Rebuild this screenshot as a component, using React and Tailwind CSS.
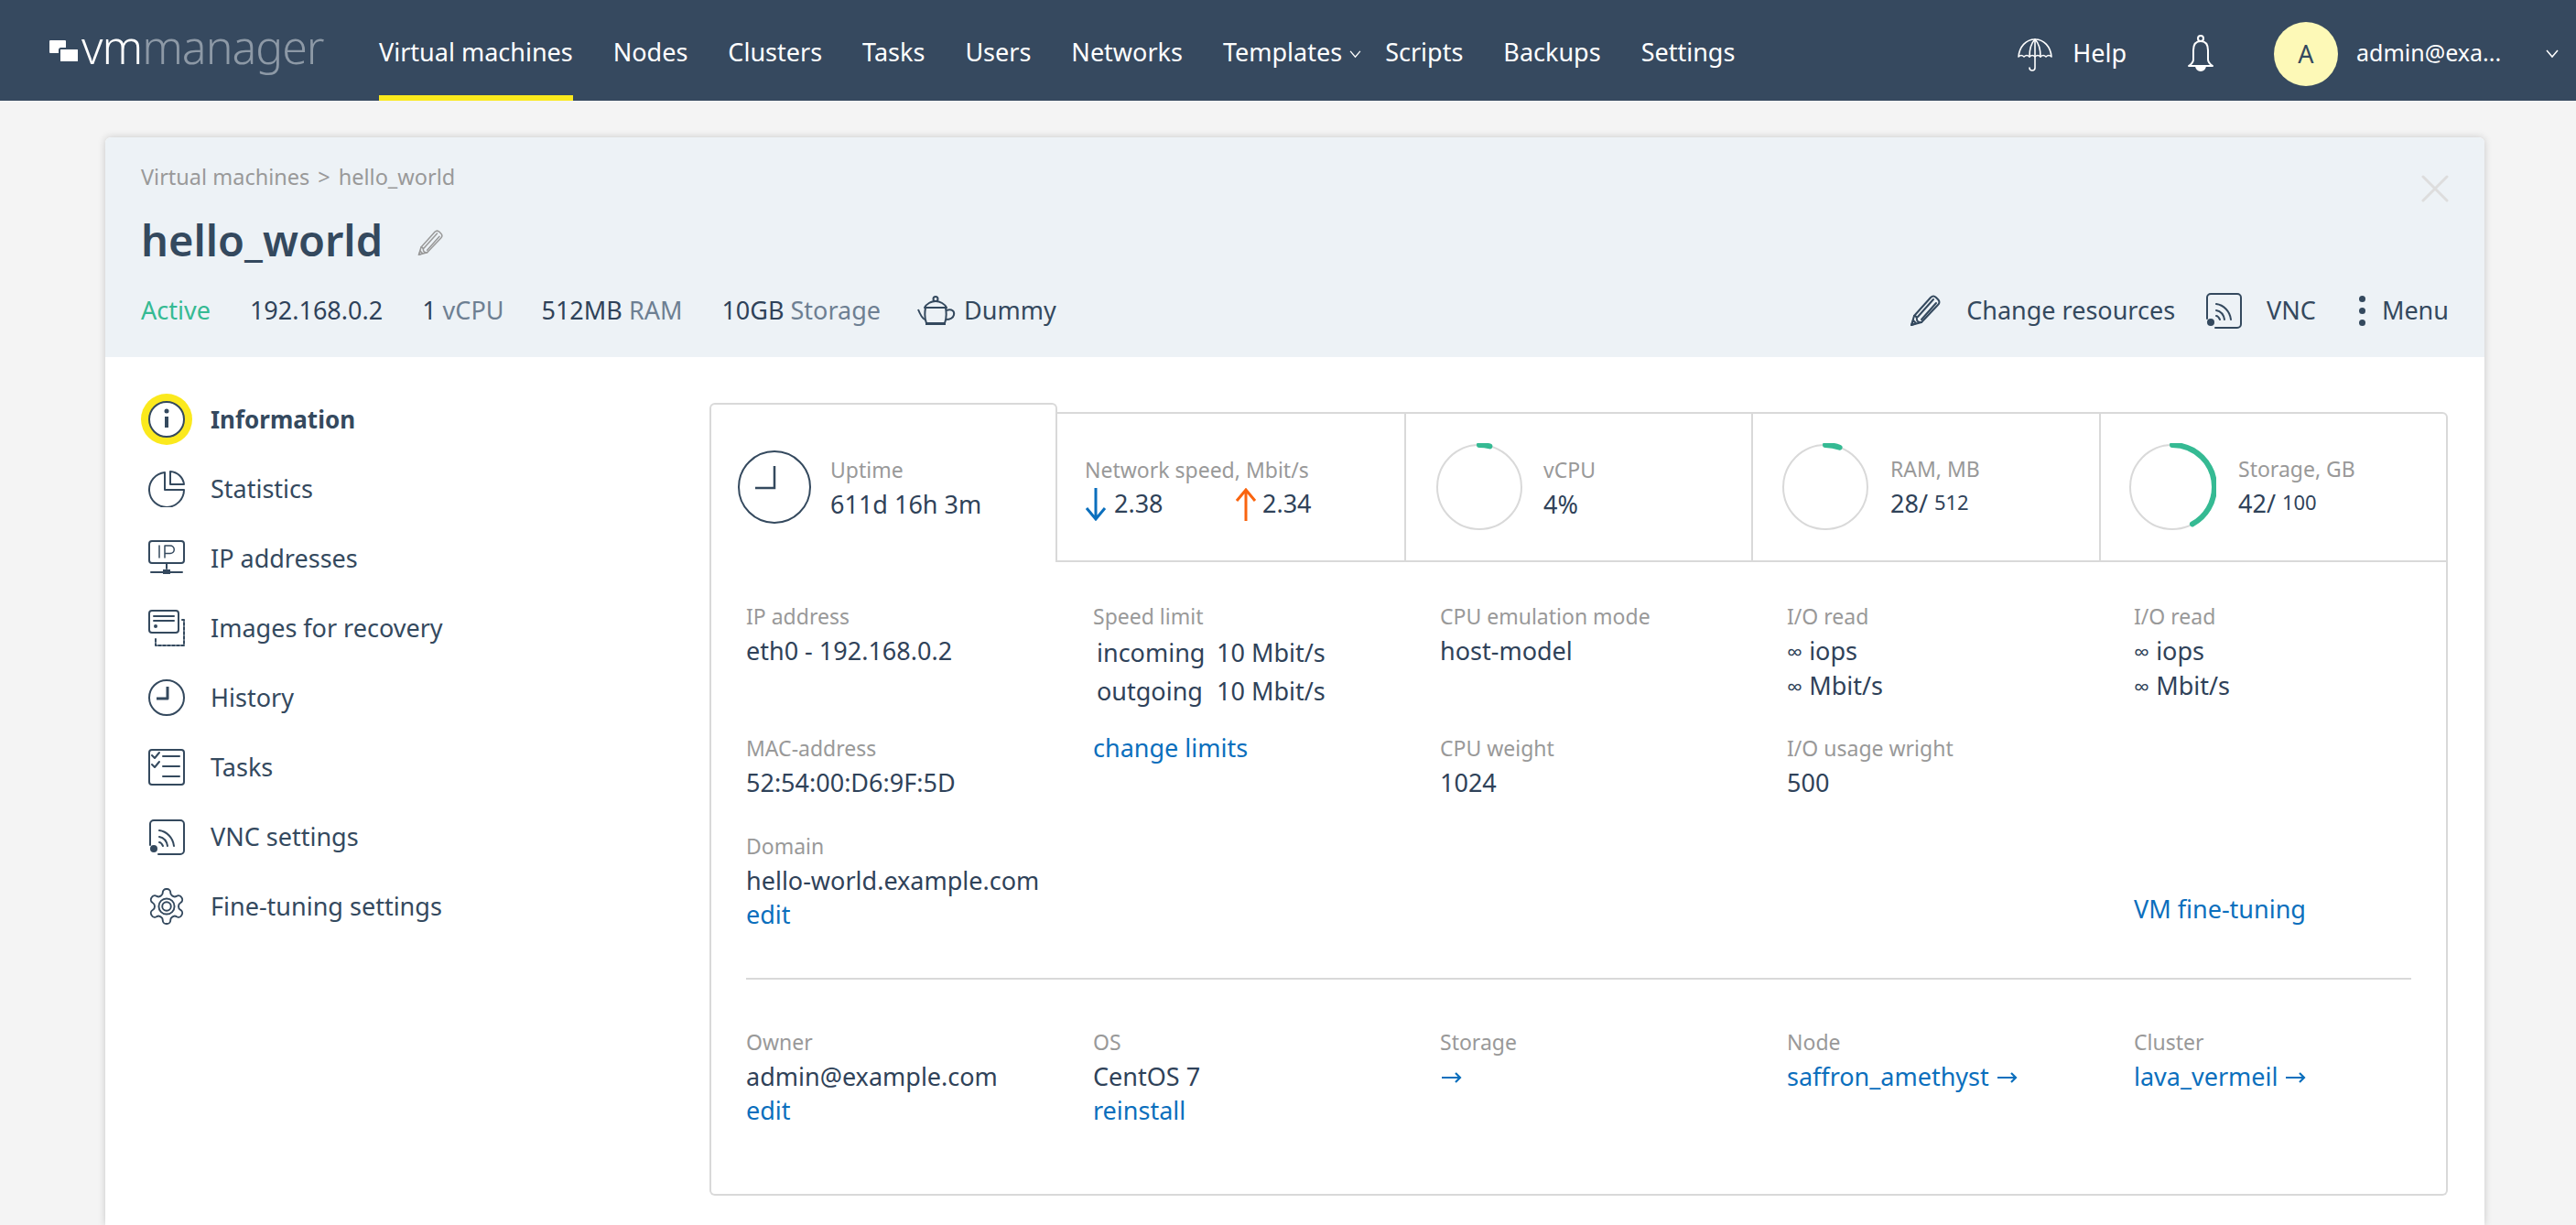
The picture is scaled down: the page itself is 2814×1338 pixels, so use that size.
const FONT = "font-['Noto_Sans','Open_Sans',sans-serif]";

function Pencil({ className, sw = 2 }) {
  return (
    <svg viewBox="0 0 34 36" fill="none" stroke="currentColor" strokeWidth={sw} strokeLinejoin="round" strokeLinecap="round" className={className}>
      <path d="M2 34l3-10L23 4c2-2 4-2 6 0l2 2c2 2 2 4 0 6L13 31z" />
      <path d="M5 24c3 0 3 2 3 4s2 3 5 3M9 25L26 6M13 28L29 10M2 34l5-2-3-3z" />
    </svg>
  );
}

function Wifi({ className }) {
  return (
    <svg viewBox="0 0 40 40" fill="none" stroke="currentColor" strokeWidth="2" strokeLinecap="round" className={className}>
      <path d="M2 29V6a4 4 0 0 1 4-4h29a4 4 0 0 1 4 4v29a4 4 0 0 1-4 4H11" />
      <circle cx="6" cy="33" r="4" fill="currentColor" stroke="none" />
      <path d="M12 13c8 1 15 8 16 17M12 20c5 1 8 4 9 10M12 26c2 0 3 2 4 4" />
    </svg>
  );
}

function SideIcon({ name }) {
  const common = { viewBox: "0 0 40 40", fill: "none", stroke: "currentColor", strokeWidth: 2, strokeLinecap: "round", strokeLinejoin: "round", className: "w-10 h-10 text-[#34495e] relative" };
  if (name === "info") return (
    <svg {...common}>
      <circle cx="20" cy="20" r="19" fill="#ffffff" />
      <path d="M20 17v12" strokeWidth="4" strokeLinecap="butt" />
      <circle cx="20" cy="11" r="2.5" fill="currentColor" stroke="none" />
    </svg>
  );
  if (name === "stats") return (
    <svg {...common}>
      <path d="M18 2A19 19 0 1 0 39 21H18z" />
      <path d="M24 1v14h15A16 16 0 0 0 24 1z" />
    </svg>
  );
  if (name === "ip") return (
    <svg {...common}>
      <rect x="1" y="1" width="38" height="24" rx="3" />
      <path d="M12 6v13M18 19V6h6a4 4 0 0 1 0 8.500h-6" strokeWidth="1.500" />
      <path d="M3 35h34M20 25v6" />
      <rect x="16" y="32" width="8" height="5" fill="currentColor" stroke="none" />
    </svg>
  );
  if (name === "images") return (
    <svg {...common}>
      <rect x="1" y="1" width="32" height="24" rx="3" />
      <path d="M6 7h22M6 12h22" />
      <circle cx="8" cy="18" r="2" fill="currentColor" stroke="none" />
      <path d="M37 11h2v28H8v-8" strokeDasharray="3 2" />
    </svg>
  );
  if (name === "clock") return (
    <svg {...common}>
      <circle cx="20" cy="20" r="19" />
      <path d="M21 8v13H9" strokeWidth="3" strokeLinecap="butt" />
    </svg>
  );
  if (name === "tasks") return (
    <svg {...common}>
      <rect x="1" y="1" width="38" height="38" rx="3" />
      <path d="M16 8h18M16 19h18M16 30h18" />
      <path d="M4 7l3 3 5-6M4 17l3 3 5-6" />
    </svg>
  );
  if (name === "vnc") return <Wifi className="w-10 h-10 text-[#34495e]" />;
  return (
    <svg viewBox="1.500 1.500 21 21" fill="none" stroke="currentColor" strokeWidth="1" className="w-10 h-10 text-[#34495e]">
      <path d="M12.22 2h-.44a2 2 0 0 0-2 2v.18a2 2 0 0 1-1 1.730l-.43.25a2 2 0 0 1-2 0l-.15-.08a2 2 0 0 0-2.730.73l-.22.38a2 2 0 0 0 .73 2.730l.15.1a2 2 0 0 1 1 1.720v.51a2 2 0 0 1-1 1.740l-.15.09a2 2 0 0 0-.73 2.730l.22.38a2 2 0 0 0 2.730.73l.15-.08a2 2 0 0 1 2 0l.43.25a2 2 0 0 1 1 1.730V20a2 2 0 0 0 2 2h.44a2 2 0 0 0 2-2v-.18a2 2 0 0 1 1-1.730l.43-.25a2 2 0 0 1 2 0l.15.08a2 2 0 0 0 2.730-.73l.22-.39a2 2 0 0 0-.73-2.730l-.15-.08a2 2 0 0 1-1-1.740v-.5a2 2 0 0 1 1-1.740l.15-.09a2 2 0 0 0 .73-2.730l-.22-.38a2 2 0 0 0-2.730-.73l-.15.08a2 2 0 0 1-2 0l-.43-.25a2 2 0 0 1-1-1.730V4a2 2 0 0 0-2-2z" />
      <circle cx="12" cy="12" r="4.500" />
      <circle cx="12" cy="12" r="2.500" />
    </svg>
  );
}

function Ring({ pct }) {
  const r = 46;
  const c = 2 * Math.PI * r;
  return (
    <svg viewBox="0 0 96 96" className="w-24 h-24 shrink-0" fill="none">
      <circle cx="48" cy="48" r={r} stroke="#d9d9d9" strokeWidth="2" />
      <circle cx="48" cy="48" r={r} stroke="#35ba93" strokeWidth="6" strokeLinecap="round" strokeDasharray={`${(pct / 100) * c} ${c}`} transform="rotate(-90 48 48)" />
    </svg>
  );
}

function Chevron({ className }) {
  return (
    <svg viewBox="0 0 14 10" fill="none" stroke="currentColor" strokeWidth="1.500" className={className}>
      <path d="M1 1l6 7 6-7" />
    </svg>
  );
}

function Label({ children }) {
  return <div className="text-[23px] leading-[37px] text-[#999999]">{children}</div>;
}
function Value({ children }) {
  return <div className="text-[27px] leading-[37px] text-[#2f4259] whitespace-nowrap">{children}</div>;
}
function Lnk({ children, className = "" }) {
  return <div className={`text-[27px] leading-[37px] text-[#0b6fbd] whitespace-nowrap ${className}`}>{children}</div>;
}
function Arrow() {
  return (
    <svg viewBox="0 0 22 14" fill="none" stroke="currentColor" strokeWidth="2.200" className="inline-block w-[22px] h-[14px] align-[2px] ml-[2px]">
      <path d="M0 7h20M15 2l5 5-5 5" />
    </svg>
  );
}
function Inf() {
  return <span className="text-[24px] mr-[1px]">∞ </span>;
}

function Nav({ children, active, className = "" }) {
  return (
    <div className={`relative h-full flex items-center pt-[5px] whitespace-nowrap ${className}`}>
      {children}
      {active && <div className="absolute left-0 right-0 bottom-0 h-[6px] bg-[#fbe91d]" />}
    </div>
  );
}

function SideRow({ icon, children, active }) {
  return (
    <div className="flex items-center h-[76px]">
      <div className="relative w-10 h-10 ml-[47px] mr-[28px]">
        {active && <div className="absolute -inset-2 rounded-full bg-[#fbe91d]" />}
        <div className="relative"><SideIcon name={icon} /></div>
      </div>
      <span className={`text-[#34495e] ${active ? "font-bold text-[26px]" : "text-[27px]"}`}>{children}</span>
    </div>
  );
}

export default function App() {
  return (
    <div className={`${FONT} w-[2814px] h-[1338px] overflow-hidden bg-[#f4f4f4] flex flex-col`}>
      <header className="h-[110px] bg-[#36495f] flex items-stretch text-white text-[27px] shrink-0">
        <div className="flex items-center w-[414px] pl-[54px] shrink-0">
          <svg viewBox="0 0 32 24" className="w-[32px] h-[24px] mr-[3px] mt-[2px]" fill="#ffffff">
            <rect x="0" y="0" width="18" height="14" rx="1" />
            <rect x="11" y="9" width="21" height="15" rx="1.500" stroke="#36495f" strokeWidth="2" />
          </svg>
          <span className="text-[50px] font-light leading-none -mt-[8px] tracking-[-1px]">vm<span className="text-[#8d99a6]">manager</span></span>
        </div>
        <div className="flex items-stretch gap-[44px]">
          <Nav active>Virtual machines</Nav>
          <Nav>Nodes</Nav>
          <Nav>Clusters</Nav>
          <Nav>Tasks</Nav>
          <Nav>Users</Nav>
          <Nav>Networks</Nav>
          <Nav className="-mr-[18px]">Templates<Chevron className="w-[13px] h-[9px] ml-[8px] mt-[4px]" /></Nav>
          <Nav>Scripts</Nav>
          <Nav>Backups</Nav>
          <Nav>Settings</Nav>
        </div>
        <div className="ml-auto flex items-center pr-[19px] pt-[8px]">
          <svg viewBox="0 0 38 40" fill="none" stroke="#ffffff" strokeWidth="1.600" strokeLinecap="round" strokeLinejoin="round" className="w-[38px] h-[40px] mr-[22px] mt-[2px]">
            <path d="M19 3v31a3 3 0 0 1-6 0" />
            <path d="M1 22C2 11 9 3 19 3s17 8 18 19c-2-2-4-2-6 0-2-2-4-2-6 0-2-2-4-2-6 0-2-2-4-2-6 0-2-2-4-2-6 0-2-2-4-2-6 0z" />
            <path d="M13 22c0-9 2-15 6-19 4 4 6 10 6 19" />
          </svg>
          <span className="-mt-[2px]">Help</span>
          <svg viewBox="0 0 28 42" fill="none" stroke="#ffffff" strokeWidth="2" strokeLinejoin="round" className="w-[28px] h-[42px] ml-[67px]">
            <circle cx="14" cy="4" r="3" />
            <path d="M14 7c-6 0-8 5-8 10v10c0 3-2 5-5 7h26c-3-2-5-4-5-7V17c0-5-2-10-8-10z" />
            <path d="M9 34a5 5 0 0 0 10 0z" fill="#ffffff" />
          </svg>
          <div className="w-[70px] h-[70px] rounded-full bg-[#fdf9b7] text-[#34495e] flex items-center justify-center ml-[66px] text-[27px]">A</div>
          <span className="ml-[20px] w-[176px] text-[25px] -mt-[2px] whitespace-nowrap">admin@exa...</span>
          <Chevron className="w-[14px] h-[10px] ml-[31px]" />
        </div>
      </header>

      <div className="flex-1 mt-[40px] mx-[115px] mr-[100px] rounded-t-[6px] bg-white shadow-[0_0_8px_rgba(0,0,0,0.18)] relative">
        <div className="h-[240px] bg-[#edf2f6] rounded-t-[6px] px-[39px] flex flex-col text-[#34495e]">
          <div className="text-[23.500px] text-[#999999] mt-[24px] leading-[38px] flex">
            <span>Virtual machines</span><span className="mx-[9px]">&gt;</span><span>hello_world</span>
          </div>
          <div className="flex items-center mt-[22px] h-[56px]">
            <span className="text-[47px] font-semibold leading-none">hello_world</span>
            <Pencil className="w-[30px] h-[30px] ml-[37px] mt-[6px] text-[#999999]" sw={1.800} />
          </div>
          <div className="flex items-center h-[40px] mt-[29px] text-[27px] whitespace-nowrap">
            <span className="text-[#35ba93] mr-[43px]">Active</span>
            <span className="mr-[43px] text-[#2f4259]">192.168.0.2</span>
            <span className="mr-[41px] text-[#2f4259]">1 <span className="text-[#6d7f92]">vCPU</span></span>
            <span className="mr-[43px] text-[#2f4259]">512MB <span className="text-[#6d7f92]">RAM</span></span>
            <span className="mr-[40px] text-[#2f4259]">10GB <span className="text-[#6d7f92]">Storage</span></span>
            <svg viewBox="0 0 42 32" fill="none" stroke="#34495e" strokeWidth="2" strokeLinejoin="round" className="w-[42px] h-[32px] mr-[9px]">
              <circle cx="20" cy="3.500" r="2.500" />
              <path d="M8 13c2-4 7-7 12-7s10 3 12 7z" />
              <path d="M9 13c-1 6-1 12 1 17h20c2-5 2-11 1-17" />
              <path d="M32 16c6-2 9 1 8 5s-4 5-9 5" />
              <path d="M8 26C5 24 3 20 1 15" />
              <path d="M9 31h22" strokeWidth="3" />
            </svg>
            <span>Dummy</span>
            <div className="ml-auto flex items-center">
              <Pencil className="w-[34px] h-[36px] mr-[28px]" />
              <span>Change resources</span>
              <Wifi className="w-[40px] h-[40px] ml-[33px] mr-[27px]" />
              <span>VNC</span>
              <span className="flex flex-col gap-[6px] ml-[47px] mr-[18px]">
                <span className="w-[7px] h-[7px] rounded-full bg-[#34495e]" />
                <span className="w-[7px] h-[7px] rounded-full bg-[#34495e]" />
                <span className="w-[7px] h-[7px] rounded-full bg-[#34495e]" />
              </span>
              <span>Menu</span>
            </div>
          </div>
        </div>
        <svg viewBox="0 0 30 30" fill="none" stroke="#dddddd" strokeWidth="3" strokeLinecap="round" className="absolute top-[41px] right-[39px] w-[30px] h-[30px]">
          <path d="M2 2l26 26M28 2L2 28" />
        </svg>

        <div className="flex">
          <div className="w-[660px] shrink-0 pt-[30px]">
            <SideRow icon="info" active>Information</SideRow>
            <SideRow icon="stats">Statistics</SideRow>
            <SideRow icon="ip">IP addresses</SideRow>
            <SideRow icon="images">Images for recovery</SideRow>
            <SideRow icon="clock">History</SideRow>
            <SideRow icon="tasks">Tasks</SideRow>
            <SideRow icon="vnc">VNC settings</SideRow>
            <SideRow icon="gear">Fine-tuning settings</SideRow>
          </div>
          <div className="w-[1899px] mt-[50px] shrink-0">
            <div className="flex items-end h-[174px]">
              <div className="w-[380px] h-[174px] border-2 border-b-0 border-[#d9d9d9] rounded-t-[6px] flex items-center pl-[29px] bg-white pt-[8px] shrink-0">
                <svg viewBox="0 0 80 80" fill="none" stroke="#34495e" strokeWidth="2" className="w-20 h-20 shrink-0 mr-[21px]">
                  <circle cx="40" cy="40" r="39" />
                  <path d="M40 17v24H19" strokeWidth="2.500" />
                </svg>
                <div><Label>Uptime</Label><Value>611d 16h 3m</Value></div>
              </div>
              <div className="flex-1 h-[164px] border-t-2 border-b-2 border-r-2 border-[#d9d9d9] rounded-tr-[6px] flex">
                <div className="w-[381px] border-r-2 border-[#d9d9d9] pl-[30px] flex flex-col justify-center shrink-0">
                  <Label>Network speed, Mbit/s</Label>
                  <div className="flex items-center h-[37px] text-[27px] text-[#2f4259]">
                    <svg viewBox="0 0 24 36" fill="none" stroke="#0b6fbd" strokeWidth="3" className="w-[24px] h-[36px] mr-[8px]"><path d="M12 0v33M2 22l10 12 10-12" /></svg>
                    <span className="w-[132px]">2.38</span>
                    <svg viewBox="0 0 24 36" fill="none" stroke="#f9640f" strokeWidth="3" className="w-[24px] h-[36px] mr-[6px]"><path d="M12 36V3M2 14L12 2l10 12" /></svg>
                    <span>2.34</span>
                  </div>
                </div>
                <div className="w-[379px] border-r-2 border-[#d9d9d9] pl-[32px] flex items-center gap-[22px] shrink-0">
                  <Ring pct={4} />
                  <div><Label>vCPU</Label><Value>4%</Value></div>
                </div>
                <div className="w-[380px] border-r-2 border-[#d9d9d9] pl-[31px] flex items-center gap-[23px] shrink-0">
                  <Ring pct={5.500} />
                  <div><Label>RAM, MB</Label><Value>28/ <span className="text-[22px] relative -top-[3px]">512</span></Value></div>
                </div>
                <div className="flex-1 pl-[30px] flex items-center gap-[24px]">
                  <Ring pct={42} />
                  <div><Label>Storage, GB</Label><Value>42/ <span className="text-[22px] relative -top-[3px]">100</span></Value></div>
                </div>
              </div>
            </div>

            <div className="border-2 border-t-0 border-[#d9d9d9] rounded-b-[6px] h-[692px] pl-[38px] pr-[38px]">
              <div className="grid grid-cols-[repeat(5,379px)] grid-rows-[144px_107px_auto] pt-[41px]">
                <div><Label>IP address</Label><Value>eth0 - 192.168.0.2</Value></div>
                <div>
                  <Label>Speed limit</Label>
                  <div className="grid grid-cols-[131px_auto] ml-[4px] text-[27px] leading-[42px] text-[#2f4259]">
                    <span>incoming</span><span>10 Mbit/s</span>
                    <span>outgoing</span><span>10 Mbit/s</span>
                  </div>
                </div>
                <div><Label>CPU emulation mode</Label><Value>host-model</Value></div>
                <div><Label>I/O read</Label><Value><Inf />iops</Value><Value><Inf />Mbit/s</Value></div>
                <div><Label>I/O read</Label><Value><Inf />iops</Value><Value><Inf />Mbit/s</Value></div>

                <div><Label>MAC-address</Label><Value>52:54:00:D6:9F:5D</Value></div>
                <div className="-mt-[1px]"><Lnk>change limits</Lnk></div>
                <div><Label>CPU weight</Label><Value>1024</Value></div>
                <div className="col-span-2"><Label>I/O usage wright</Label><Value>500</Value></div>

                <div className="col-span-4"><Label>Domain</Label><Value>hello-world.example.com</Value><Lnk>edit</Lnk></div>
                <div className="self-end mb-[6px]"><Lnk>VM fine-tuning</Lnk></div>
              </div>
              <div className="h-[2px] bg-[#d9d9d9] mt-[51px]" />
              <div className="grid grid-cols-[repeat(5,379px)] pt-[50px]">
                <div><Label>Owner</Label><Value>admin@example.com</Value><Lnk>edit</Lnk></div>
                <div><Label>OS</Label><Value>CentOS 7</Value><Lnk>reinstall</Lnk></div>
                <div><Label>Storage</Label><Lnk><Arrow /></Lnk></div>
                <div><Label>Node</Label><Lnk>saffron_amethyst <Arrow /></Lnk></div>
                <div><Label>Cluster</Label><Lnk>lava_vermeil <Arrow /></Lnk></div>
              </div>
            </div>
          </div>
        </div>
      </div>
    </div>
  );
}
